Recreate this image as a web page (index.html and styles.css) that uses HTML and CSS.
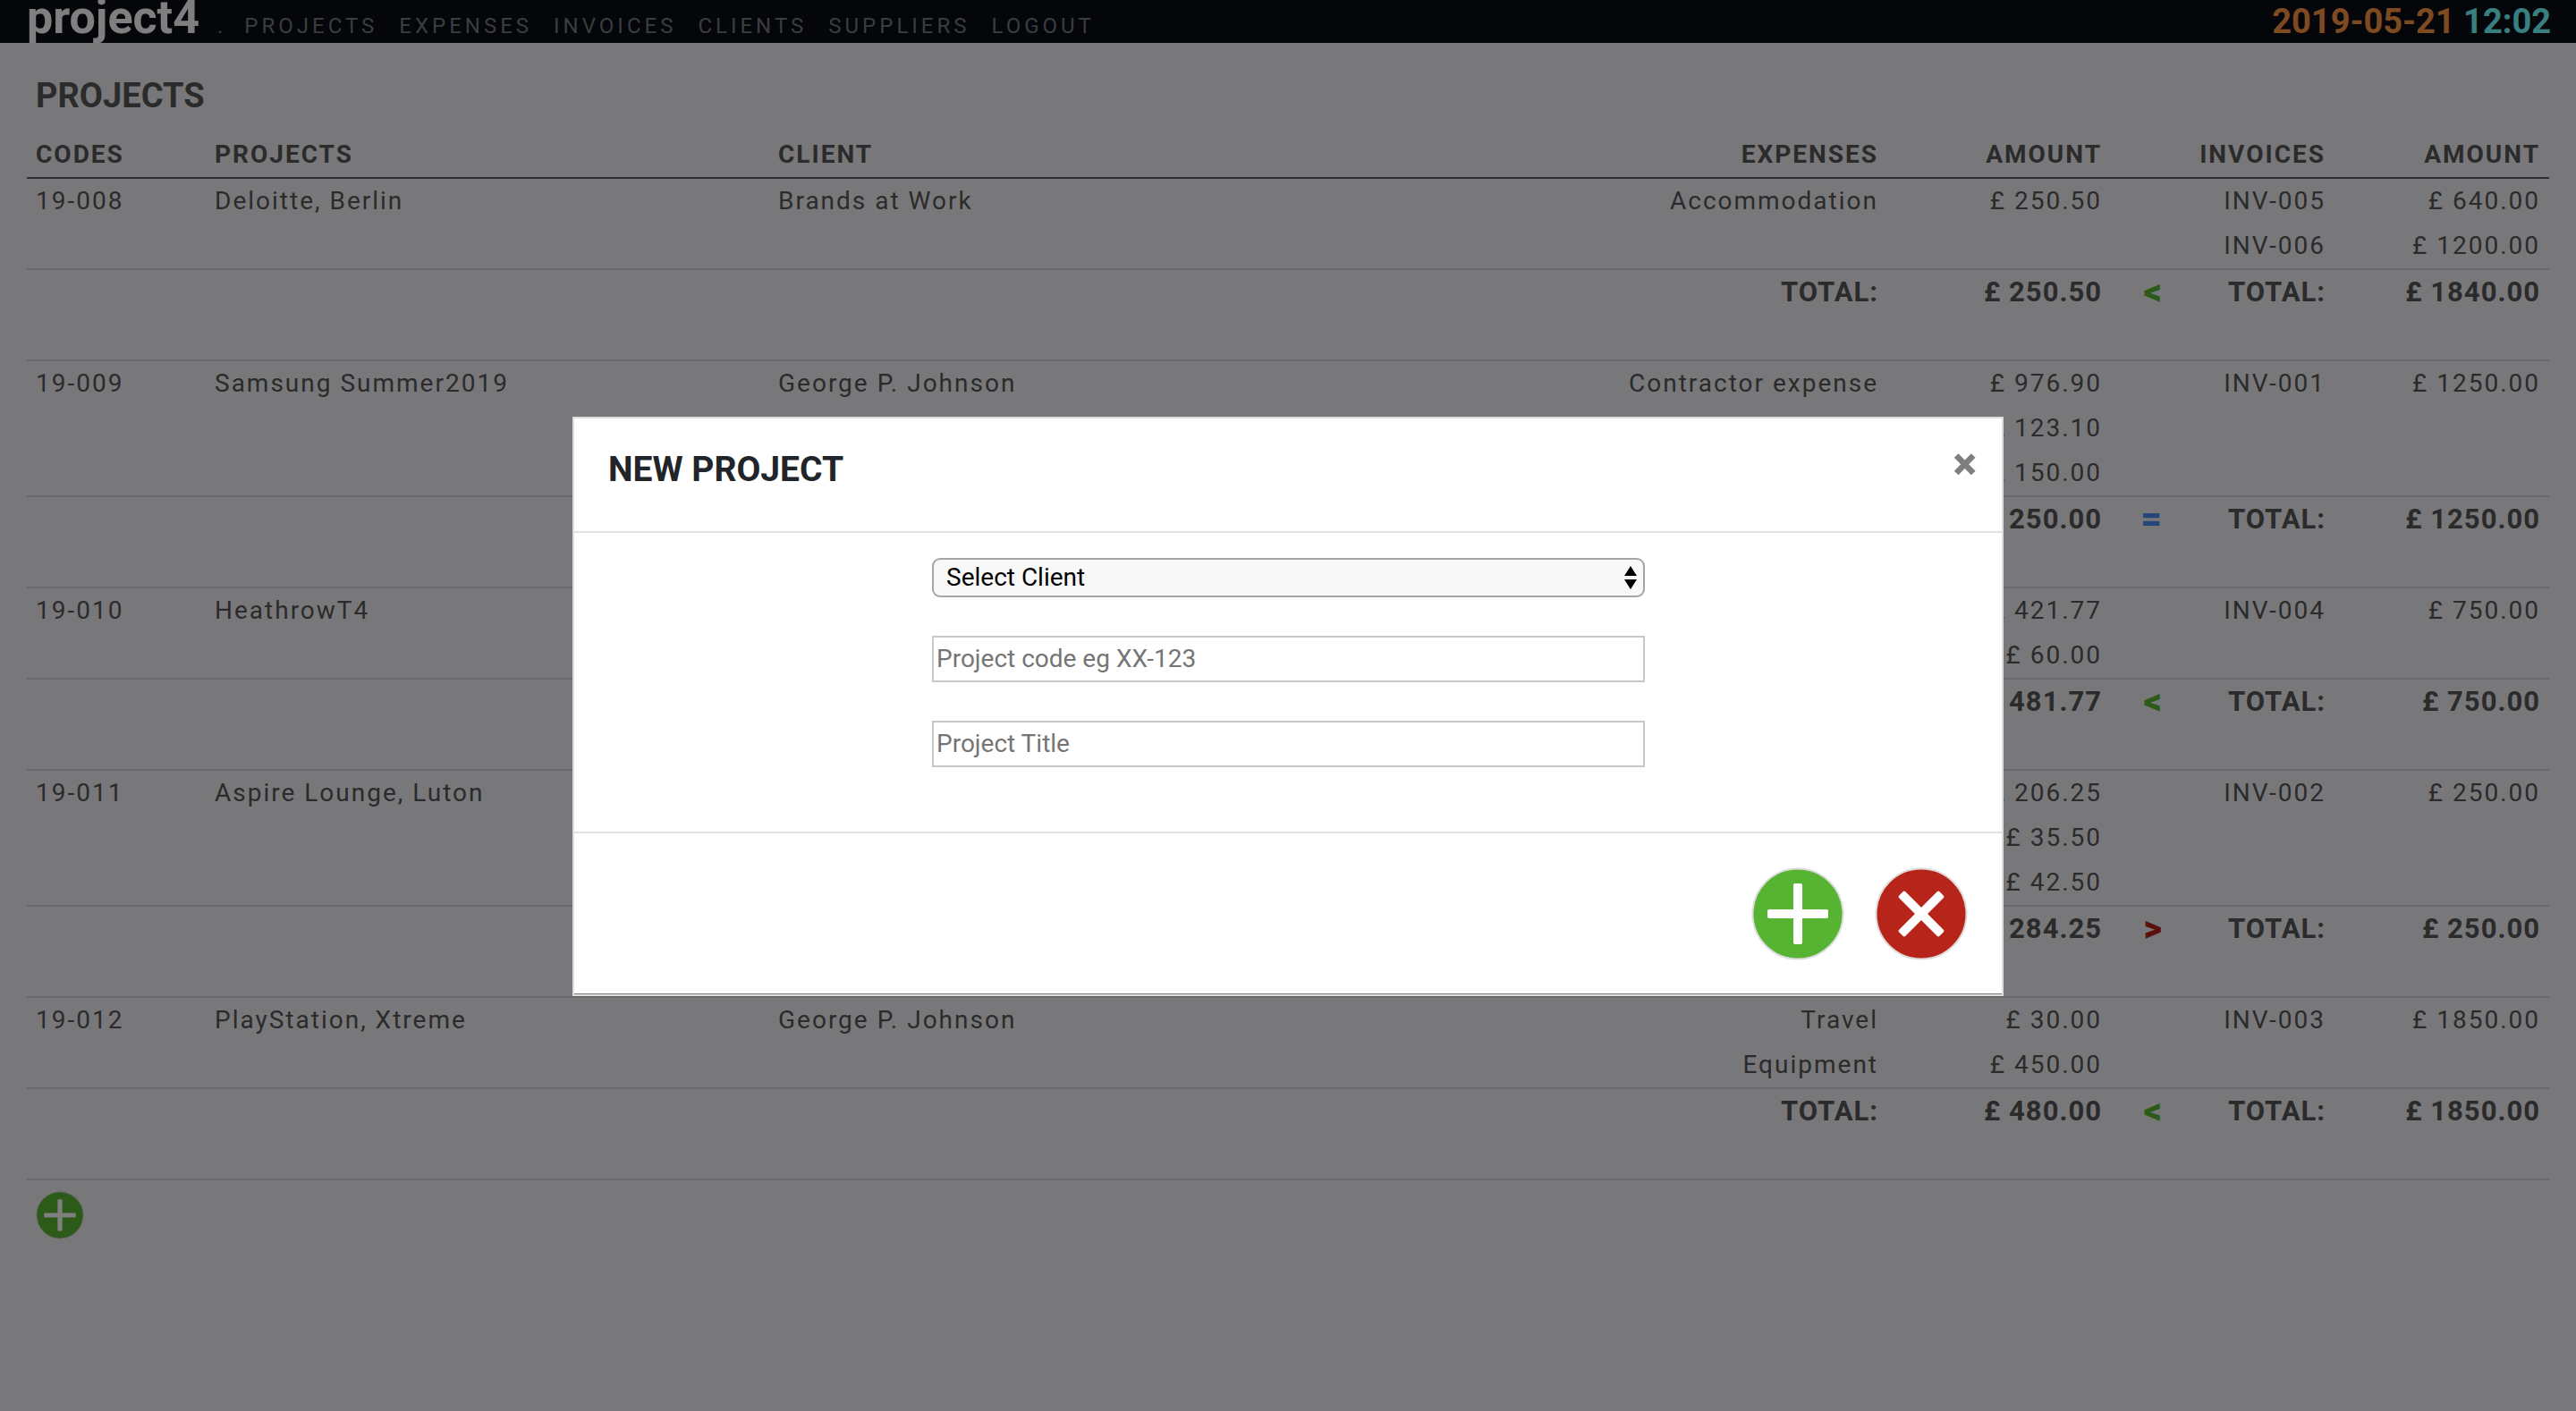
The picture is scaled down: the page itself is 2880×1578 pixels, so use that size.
FILE: index.html
```html
<!DOCTYPE html>
<html lang="en">
<head>
<meta charset="utf-8">
<title>project4 . Projects</title>
<link rel="stylesheet" href="styles.css">
</head>
<body>
<header class="navbar">
  <nav class="nav" aria-label="Main">
    <a class="brand" href="#">project4</a>
    <span class="dot">.</span>
    <div class="links">
      <a href="#">PROJECTS</a>
      <a href="#">EXPENSES</a>
      <a href="#">INVOICES</a>
      <a href="#">CLIENTS</a>
      <a href="#">SUPPLIERS</a>
      <a href="#">LOGOUT</a>
    </div>
  </nav>
  <div class="clock"><span class="date">2019-05-21</span> <span class="time">12:02</span></div>
</header>

<main class="page">
  <h1 class="page-title">PROJECTS</h1>
  <table class="projects">
    <colgroup>
      <col class="col-code"><col class="col-project"><col class="col-client"><col class="col-expense">
      <col class="col-amount"><col class="col-sign"><col class="col-invoice"><col class="col-billed">
    </colgroup>
    <thead>
      <tr><th>CODES</th><th>PROJECTS</th><th>CLIENT</th><th class="num">EXPENSES</th><th class="num">AMOUNT</th><th></th><th class="num">INVOICES</th><th class="num">AMOUNT</th></tr>
    </thead>
    <tbody>
      <tr><td>19-008</td><td>Deloitte, Berlin</td><td>Brands at Work</td><td class="num">Accommodation</td><td class="num">£ 250.50</td><td></td><td class="num">INV-005<br>INV-006</td><td class="num">£ 640.00<br>£ 1200.00</td></tr>
      <tr class="total"><td></td><td></td><td></td><td class="num">TOTAL:</td><td class="num">£ 250.50</td><td class="sign under">&lt;</td><td class="num">TOTAL:</td><td class="num">£ 1840.00</td></tr>
      <tr><td>19-009</td><td>Samsung Summer2019</td><td>George P. Johnson</td><td class="num">Contractor expense</td><td class="num">£ 976.90<br>£ 123.10<br>£ 150.00</td><td></td><td class="num">INV-001</td><td class="num">£ 1250.00</td></tr>
      <tr class="total"><td></td><td></td><td></td><td class="num">TOTAL:</td><td class="num">£ 1250.00</td><td class="sign even">=</td><td class="num">TOTAL:</td><td class="num">£ 1250.00</td></tr>
      <tr><td>19-010</td><td>HeathrowT4</td><td></td><td></td><td class="num">£ 421.77<br>£ 60.00</td><td></td><td class="num">INV-004</td><td class="num">£ 750.00</td></tr>
      <tr class="total"><td></td><td></td><td></td><td class="num">TOTAL:</td><td class="num">£ 481.77</td><td class="sign under">&lt;</td><td class="num">TOTAL:</td><td class="num">£ 750.00</td></tr>
      <tr><td>19-011</td><td>Aspire Lounge, Luton</td><td></td><td></td><td class="num">£ 206.25<br>£ 35.50<br>£ 42.50</td><td></td><td class="num">INV-002</td><td class="num">£ 250.00</td></tr>
      <tr class="total"><td></td><td></td><td></td><td class="num">TOTAL:</td><td class="num">£ 284.25</td><td class="sign over">&gt;</td><td class="num">TOTAL:</td><td class="num">£ 250.00</td></tr>
      <tr><td>19-012</td><td>PlayStation, Xtreme</td><td>George P. Johnson</td><td class="num">Travel<br>Equipment</td><td class="num">£ 30.00<br>£ 450.00</td><td></td><td class="num">INV-003</td><td class="num">£ 1850.00</td></tr>
      <tr class="total"><td></td><td></td><td></td><td class="num">TOTAL:</td><td class="num">£ 480.00</td><td class="sign under">&lt;</td><td class="num">TOTAL:</td><td class="num">£ 1850.00</td></tr>
    </tbody>
  </table>
  <button class="round add small" type="button" aria-label="New project">
    <svg viewBox="0 0 104 104" aria-hidden="true"><circle class="disc" cx="52" cy="52" r="50.5"/><g class="mark"><rect x="47" y="18" width="10" height="68" rx="2"/><rect x="18" y="47" width="68" height="10" rx="2"/></g></svg>
  </button>
</main>

<div class="backdrop">
  <form class="modal" role="dialog" aria-labelledby="modal-title">
    <div class="modal-head">
      <h2 class="modal-title" id="modal-title">NEW PROJECT</h2>
      <button class="close" type="button" aria-label="Close">×</button>
    </div>
    <div class="modal-body">
      <div class="picker">
        <select class="field select" aria-label="Client"><option>Select Client</option></select>
        <svg class="arrows" viewBox="0 0 14 26" aria-hidden="true"><path d="M7 0L14 11H0ZM0 15H14L7 26Z"/></svg>
      </div>
      <input class="field" type="text" aria-label="Project code" placeholder="Project code eg XX-123">
      <input class="field" type="text" aria-label="Project title" placeholder="Project Title">
    </div>
    <div class="modal-foot">
      <button class="round add" type="submit" aria-label="Add project">
        <svg viewBox="0 0 104 104" aria-hidden="true"><circle class="disc" cx="52" cy="52" r="50.5"/><g class="mark"><rect x="47" y="18" width="10" height="68" rx="2"/><rect x="18" y="47" width="68" height="10" rx="2"/></g></svg>
      </button>
      <button class="round cancel" type="button" aria-label="Cancel">
        <svg viewBox="0 0 104 104" aria-hidden="true"><circle class="disc" cx="52" cy="52" r="50.5"/><g class="mark" transform="rotate(45 52 52)"><rect x="47" y="20" width="10" height="64" rx="2"/><rect x="20" y="47" width="64" height="10" rx="2"/></g></svg>
      </button>
    </div>
  </form>
</div>
</body>
</html>
```
FILE: styles.css
```css
* { box-sizing: border-box; }

body {
  margin: 0;
  background: #f1f1f4;
  color: #565658;
  font-family: Roboto, "Liberation Sans", sans-serif;
  font-size: 28px;
  line-height: 50px;
}

.navbar {
  display: flex;
  justify-content: space-between;
  align-items: baseline;
  height: 48px;
  padding: 0 28px 0 30px;
  background: #080c14;
  line-height: 40px;
}

.nav {
  display: flex;
  align-items: baseline;
  gap: 20px;
  font-size: 24px;
  letter-spacing: 4px;
}

.links { display: flex; gap: 24px; }

.nav a, .dot { color: #747a82; text-decoration: none; }

.nav .brand {
  color: #fff;
  font-size: 52px;
  font-weight: 700;
  letter-spacing: 0;
}

.clock { font-size: 38px; font-weight: 700; }
.date { color: #fb9444; }
.time { color: #74ffff; }

.page { padding: 34px 30px; }

.page-title {
  margin: 0;
  padding: 0 10px;
  font-size: 38px;
  font-weight: 700;
}

.projects {
  width: 100%;
  margin-top: 16px;
  border-collapse: collapse;
  table-layout: fixed;
  letter-spacing: 2px;
}

.col-code { width: 200px; }
.col-project { width: 630px; }
.col-expense { width: 620px; }
.col-amount { width: 250px; }
.col-sign { width: 80px; }
.col-invoice { width: 170px; }
.col-billed { width: 240px; }

.projects th, .projects td {
  height: 50px;
  padding: 0 10px;
  text-align: left;
  vertical-align: top;
}

.projects .num { text-align: right; }
.projects th { border-bottom: 2px solid #5a5d61; }
.projects td { border-bottom: 2px solid #d0d0d4; }

.projects .total td { height: 102px; font-size: 31px; font-weight: 700; letter-spacing: 1px; }

.projects .total .sign {
  padding-right: 22px;
  text-align: right;
  font-size: 40px;
  font-weight: 900;
}

.under { color: #58b432; }
.even { color: #488cf0; }
.over { color: #b82018; }

.round {
  display: block;
  width: 104px;
  height: 104px;
  padding: 0;
  border: 0;
  background: none;
}

.round svg { display: block; width: 100%; height: 100%; }
.small { width: 54px; height: 54px; margin: 12px 10px; }
.disc { stroke: #dcdcdc; stroke-width: 2; }
.mark { fill: #fff; }
.add .disc { fill: #57b432; }
.cancel .disc { fill: #b72419; }

.backdrop {
  position: fixed;
  inset: 0;
  padding: 466px 640px 0;
  background: rgba(0, 0, 0, 0.5);
}

.modal {
  border: 2px solid #dcdcdc;
  background: #fff;
  color: #212529;
}

.modal-head {
  display: flex;
  justify-content: space-between;
  align-items: flex-start;
  padding: 32px 28px 44px 38px;
  border-bottom: 2px solid #dee2e6;
}

.modal-title { margin: 0; font-size: 39px; font-weight: 700; }

.close {
  padding: 0;
  border: 0;
  background: none;
  color: #7f7f7f;
  font: 900 50px/38px Roboto, sans-serif;
}

.modal-body {
  display: flex;
  flex-direction: column;
  align-items: center;
  gap: 43px;
  padding: 28px 399px 72px 400px;
  border-bottom: 2px solid #dee2e6;
}

.field {
  display: block;
  width: 100%;
  height: 52px;
  padding: 0 3px 2px;
  border: 2px solid #c8c8c8;
  background: #fff;
  color: #000;
  font: 28px Roboto, sans-serif;
}

.field::placeholder { color: #757575; opacity: 1; }

.picker { position: relative; width: 100%; }

.select {
  height: 44px;
  padding: 0 14px 2px;
  border-color: #a5a5a5;
  border-radius: 9px;
  background: #f8f8f8;
  appearance: none;
}

.arrows {
  position: absolute;
  top: 9px;
  right: 9px;
  width: 14px;
  height: 26px;
  pointer-events: none;
}

.modal-foot {
  display: flex;
  justify-content: flex-end;
  gap: 34px;
  padding: 38px 38px 37px;
  border-bottom: 1px solid #7c807c;
}
```
